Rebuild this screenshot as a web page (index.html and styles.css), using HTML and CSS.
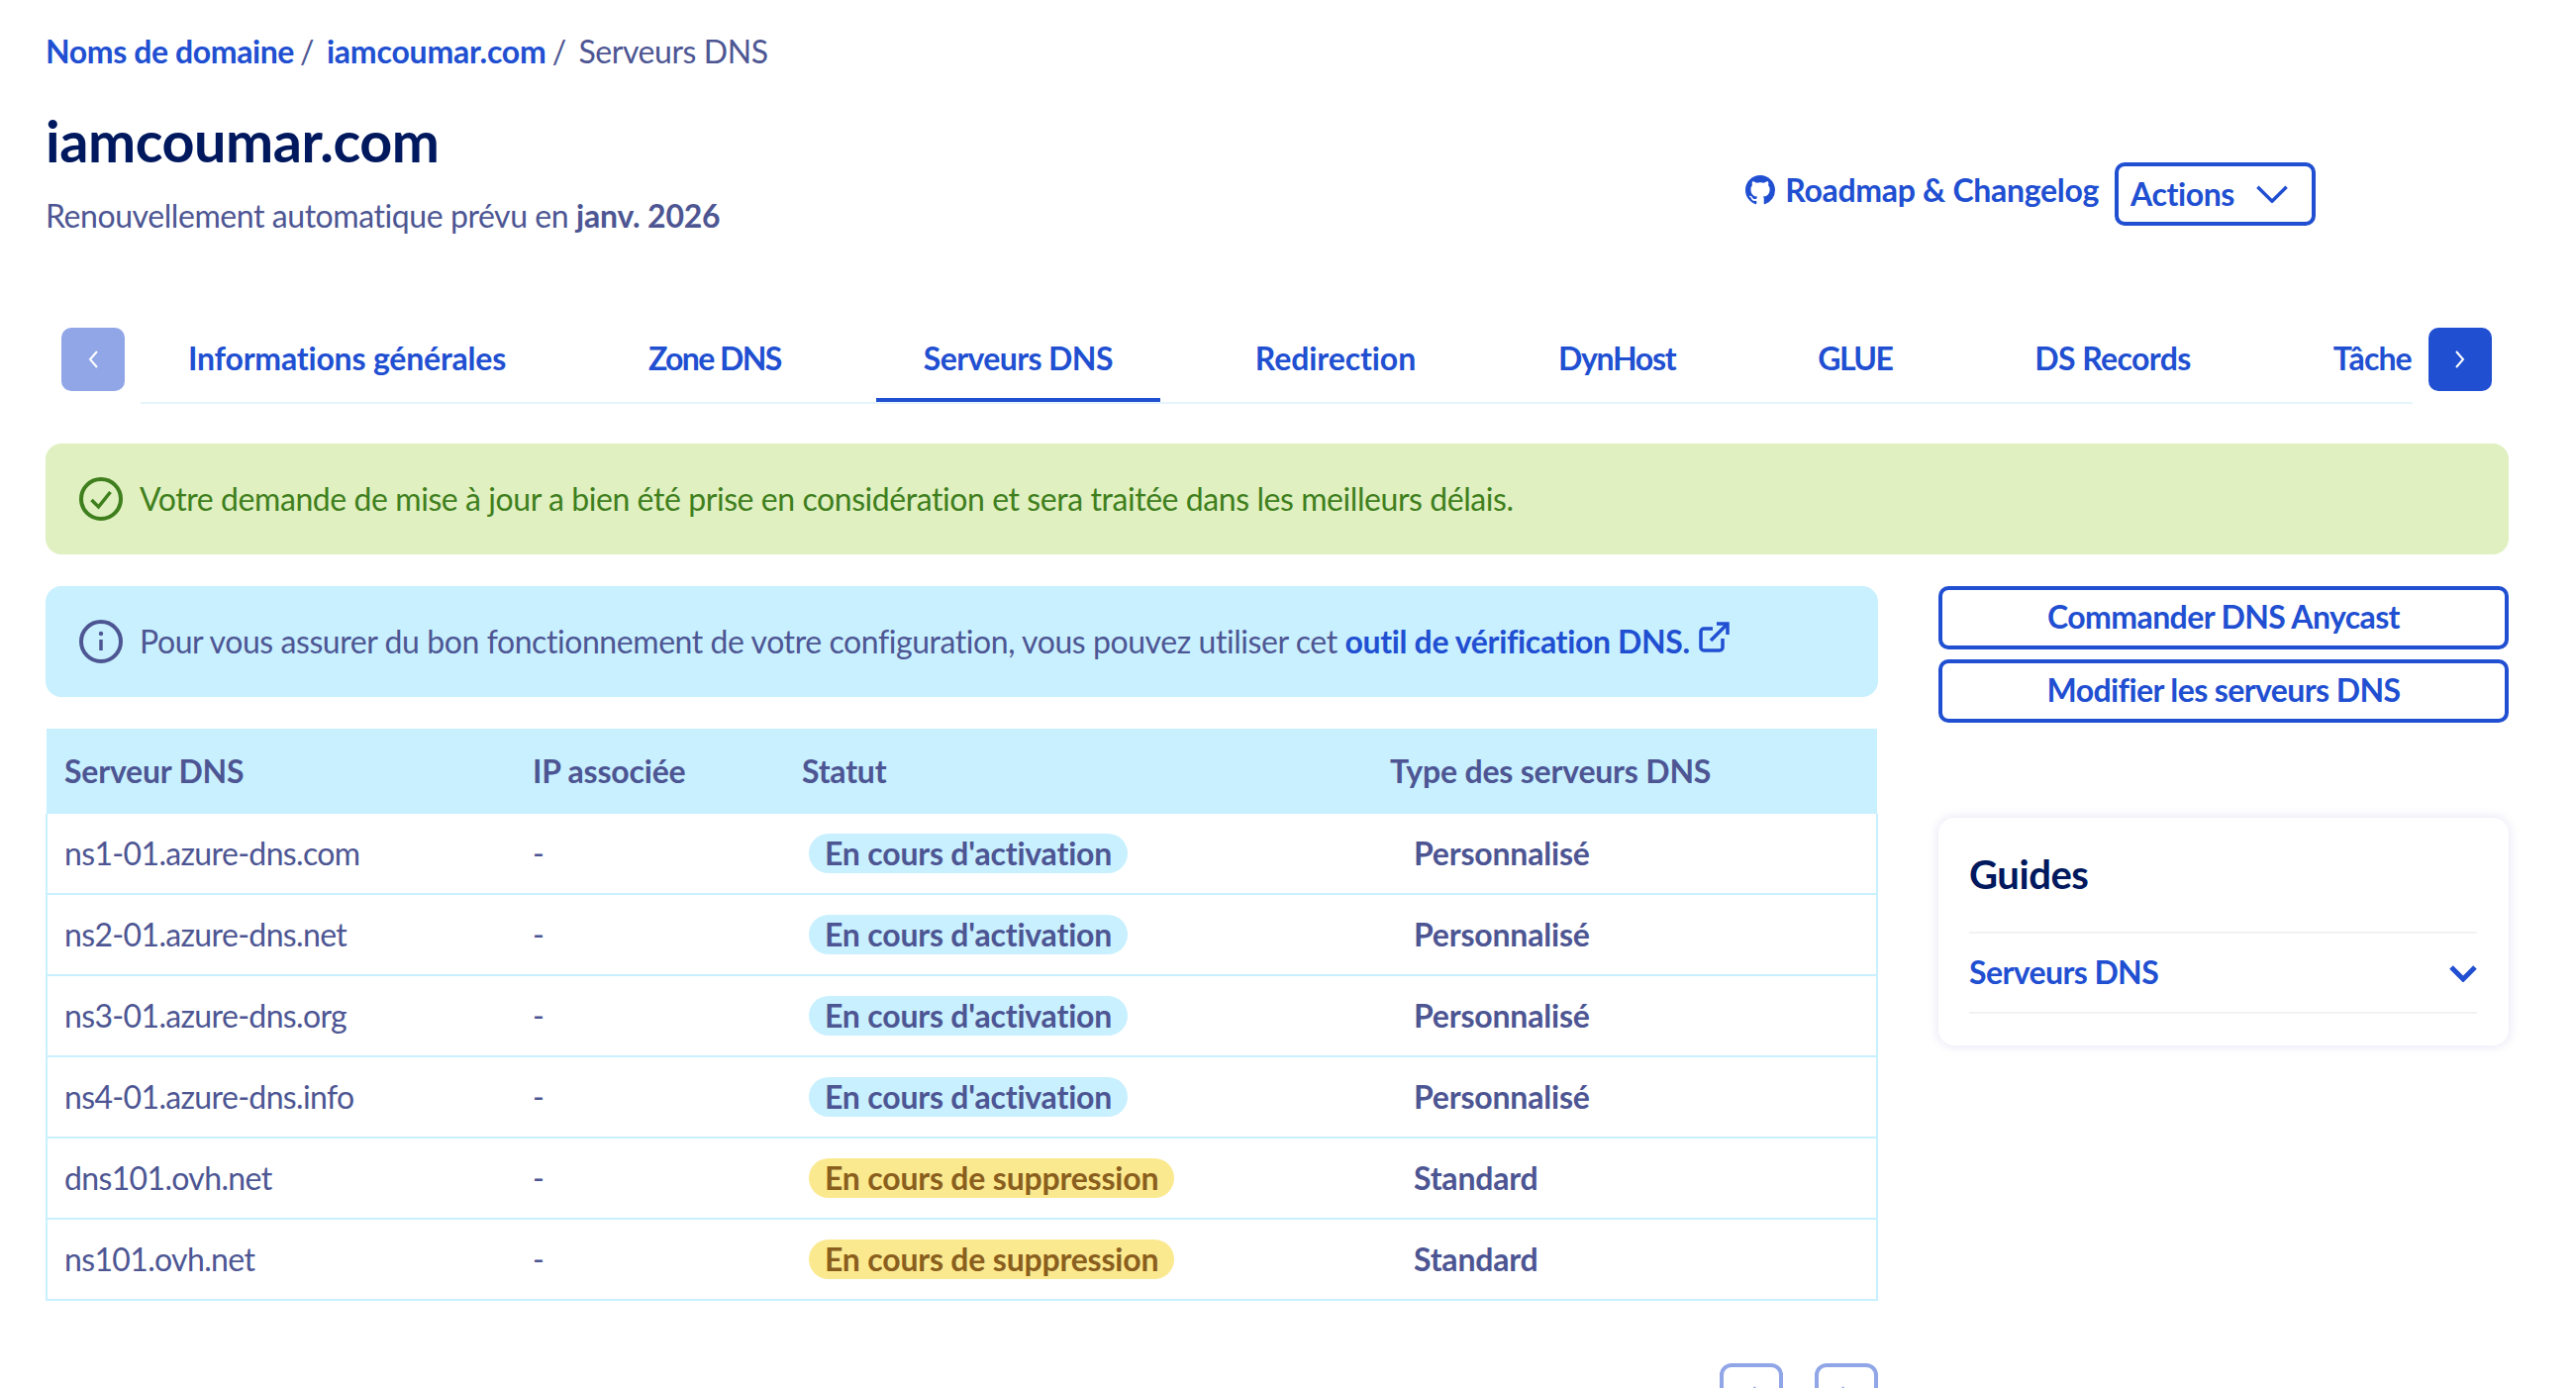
FILE: index.html
```html
<!DOCTYPE html>
<html lang="fr">
<head>
  <meta charset="UTF-8" />
  <meta name="viewport" content="width=device-width, initial-scale=1" />
  <title>Serveurs DNS</title>
  <link rel="stylesheet" href="styles.css">
</head>
<body>

<div class="page">

  <nav class="breadcrumb">
    <a href="#">Noms de domaine</a><span class="sep">/</span>
    <a href="#">iamcoumar.com</a><span class="sep">/</span>
    <span class="current">Serveurs DNS</span>
  </nav>

  <header class="header">
    <div>
      <h1>iamcoumar.com</h1>
      <p class="renew">Renouvellement automatique prévu en <strong>janv. 2026</strong></p>
    </div>
    <div class="header-actions">
      <a class="roadmap" href="#">
        <svg class="gh" viewBox="0 0 16 16" fill="currentColor"><path d="M8 0C3.58 0 0 3.58 0 8c0 3.54 2.29 6.53 5.47 7.59.4.07.55-.17.55-.38 0-.19-.01-.82-.01-1.49-2.01.37-2.53-.49-2.69-.94-.09-.23-.48-.94-.82-1.13-.28-.15-.68-.52-.01-.53.63-.01 1.08.58 1.23.82.72 1.21 1.87.87 2.33.66.07-.52.28-.87.51-1.07-1.78-.2-3.64-.89-3.64-3.95 0-.87.31-1.59.82-2.15-.08-.2-.36-1.02.08-2.12 0 0 .67-.21 2.2.82.64-.18 1.32-.27 2-.27s1.36.09 2 .27c1.53-1.04 2.2-.82 2.2-.82.44 1.1.16 1.92.08 2.12.51.56.82 1.27.82 2.15 0 3.07-1.87 3.75-3.65 3.95.29.25.54.73.54 1.48 0 1.07-.01 1.93-.01 2.2 0 .21.15.46.55.38A8.01 8.01 0 0 0 16 8c0-4.42-3.58-8-8-8z"/></svg>
        Roadmap &amp; Changelog
      </a>
      <button class="btn-actions"><span>Actions</span>
        <svg class="chev" viewBox="0 0 28 16" fill="none" stroke="currentColor" stroke-width="3"><path d="M1 1.5l13 13 13-13"/></svg>
      </button>
    </div>
  </header>

  <div class="tabs">
    <button class="tab-arrow disabled">
      <svg viewBox="0 0 12 20" fill="none" stroke="currentColor" stroke-width="2"><path d="M10 2L3 10l7 8"/></svg>
    </button>
    <ul class="tab-list">
      <li><a href="#">Informations générales</a></li>
      <li><a href="#">Zone DNS</a></li>
      <li><a class="active" href="#">Serveurs DNS</a></li>
      <li><a href="#">Redirection</a></li>
      <li><a href="#">DynHost</a></li>
      <li><a href="#">GLUE</a></li>
      <li><a href="#">DS Records</a></li>
      <li><a href="#">Tâche</a></li>
    </ul>
    <button class="tab-arrow">
      <svg viewBox="0 0 12 20" fill="none" stroke="currentColor" stroke-width="2"><path d="M2 2l7 8-7 8"/></svg>
    </button>
  </div>

  <div class="message success">
    <svg class="msg-icon" viewBox="0 0 44 44" fill="none" stroke="currentColor" stroke-width="4"><circle cx="22" cy="22" r="20"/><path d="M12.5 23l7 7 12-15" stroke-width="3.5"/></svg>
    <span>Votre demande de mise à jour a bien été prise en considération et sera traitée dans les meilleurs délais.</span>
  </div>

  <div class="columns">
    <main class="main-col">
      <div class="message info">
        <svg class="msg-icon" viewBox="0 0 44 44" fill="none" stroke="currentColor" stroke-width="4"><circle cx="22" cy="22" r="20"/><path d="M22 20v11" stroke-width="3.5"/><circle cx="22" cy="14" r="2.2" fill="currentColor" stroke="none"/></svg>
        <span>Pour vous assurer du bon fonctionnement de votre configuration, vous pouvez utiliser cet <a href="#">outil de vérification DNS.</a>
          <svg class="ext" viewBox="0 0 32 32" fill="none" stroke="#214fd1" stroke-width="3.5"><path d="M25 17v9a3 3 0 0 1-3 3H6a3 3 0 0 1-3-3V10a3 3 0 0 1 3-3h9"/><path d="M13 19L29 3"/><path d="M19 2h11v11"/></svg>
        </span>
      </div>

      <table class="dns-table">
        <thead>
          <tr>
            <th class="c-name">Serveur DNS</th>
            <th class="c-ip">IP associée</th>
            <th class="c-status">Statut</th>
            <th>Type des serveurs DNS</th>
          </tr>
        </thead>
        <tbody>
          <tr><td>ns1-01.azure-dns.com</td><td>-</td><td><span class="badge blue">En cours d'activation</span></td><td class="type">Personnalisé</td></tr>
          <tr><td>ns2-01.azure-dns.net</td><td>-</td><td><span class="badge blue">En cours d'activation</span></td><td class="type">Personnalisé</td></tr>
          <tr><td>ns3-01.azure-dns.org</td><td>-</td><td><span class="badge blue">En cours d'activation</span></td><td class="type">Personnalisé</td></tr>
          <tr><td>ns4-01.azure-dns.info</td><td>-</td><td><span class="badge blue">En cours d'activation</span></td><td class="type">Personnalisé</td></tr>
          <tr><td>dns101.ovh.net</td><td>-</td><td><span class="badge yellow">En cours de suppression</span></td><td class="type">Standard</td></tr>
          <tr><td>ns101.ovh.net</td><td>-</td><td><span class="badge yellow">En cours de suppression</span></td><td class="type">Standard</td></tr>
        </tbody>
      </table>

      <div class="pager">
        <button class="pager-btn"><svg viewBox="0 0 12 20" fill="none" stroke="currentColor" stroke-width="2"><path d="M10 2L3 10l7 8"/></svg></button>
        <button class="pager-btn"><svg viewBox="0 0 12 20" fill="none" stroke="currentColor" stroke-width="2"><path d="M2 2l7 8-7 8"/></svg></button>
      </div>
    </main>

    <aside class="side-col">
      <button class="btn-outline">Commander DNS Anycast</button>
      <button class="btn-outline">Modifier les serveurs DNS</button>

      <section class="guides">
        <h2>Guides</h2>
        <a class="guide-row" href="#">
          <span>Serveurs DNS</span>
          <svg viewBox="0 0 28 18" fill="none" stroke="currentColor" stroke-width="5"><path d="M2 3L14 15 26 3"/></svg>
        </a>
      </section>
    </aside>
  </div>

</div>

</body>
</html>
```

FILE: styles.css
```css
html, body {
  margin: 0;
  height: 100%;
  overflow: hidden;
  background: #fff;
}
body {
  font-family: "Lato", "Open Sans", sans-serif;
  font-size: 32px;
  line-height: 40px;
  color: #4d5693;
  letter-spacing: -0.43px;
}
a {
  color: #214fd1;
  text-decoration: none;
}
strong, .breadcrumb a, th, .badge, td.type {
  letter-spacing: -0.2px;
}
button {
  font-family: inherit;
  background: #fff;
  cursor: pointer;
}
.page {
  padding: 32px 68px 0 46px;
}

/* en-tete */
.breadcrumb {
  height: 40px;
  white-space: nowrap;
}
.breadcrumb a {
  font-weight: 700;
}
.breadcrumb a:first-child {
  letter-spacing: -0.4px;
}
.breadcrumb .sep {
  margin: 0 5px 0 6px;
}
.header {
  display: flex;
  justify-content: space-between;
  align-items: flex-end;
  margin-top: 38px;
}
h1 {
  margin: 0;
  font-size: 57.5px;
  line-height: 64px;
  font-weight: 700;
  color: #00185e;
}
.renew {
  margin: 24px 0 0;
}
.renew strong {
  font-weight: 700;
}
.header-actions {
  display: flex;
  align-items: center;
  gap: 16px;
  margin: 0 195px 10px 0;
}
.roadmap {
  display: flex;
  align-items: center;
  gap: 10px;
  font-weight: 700;
  letter-spacing: -0.3px;
  margin-top: -8px;
}
.gh {
  width: 30px;
  height: 30px;
}
.btn-actions {
  display: flex;
  align-items: center;
  justify-content: space-between;
  width: 203px;
  height: 64px;
  padding: 0 24px 0 12px;
  border: 4px solid #214fd1;
  border-radius: 10px;
  color: #214fd1;
  font-size: 32px;
  letter-spacing: -0.4px;
  font-weight: 700;
}
.btn-actions span {
  margin-top: -2px;
}
.chev {
  width: 32px;
  height: 18px;
}

/* onglets */
.tabs {
  display: flex;
  gap: 16px;
  margin: 93px 17px 0 16px;
  align-items: flex-start;
}
.tab-arrow {
  flex: none;
  width: 64px;
  height: 64px;
  border: 0;
  border-radius: 10px;
  background: #214fd1;
  color: #fff;
  padding: 0;
}
.tab-arrow.disabled {
  background: #91a6e7;
}
.tab-arrow svg,
.pager-btn svg {
  width: 12px;
  height: 20px;
  display: block;
  margin: auto;
}
.tab-list {
  flex: 1;
  display: flex;
  gap: 48px;
  margin: 0;
  padding: 0;
  list-style: none;
  overflow: hidden;
  white-space: nowrap;
  border-bottom: 2px solid #e6f5fc;
}
.tab-list a {
  display: block;
  padding: 11px 48px 20px;
  border-bottom: 4px solid transparent;
  font-weight: 700;
  letter-spacing: -0.6px;
}
.tab-list li:nth-child(1) a { letter-spacing: -0.2px; }
.tab-list li:nth-child(2) a { letter-spacing: -1.6px; }
.tab-list li:nth-child(4) a { letter-spacing: -0.1px; }
.tab-list li:nth-child(5) a { letter-spacing: -1.3px; }
.tab-list li:nth-child(6) a { letter-spacing: -1.6px; }
.tab-list li:nth-child(8) a {
  padding-right: 0;
  letter-spacing: -0.9px;
}
.tab-list a.active {
  border-bottom-color: #214fd1;
}

/* messages */
.message {
  display: flex;
  align-items: center;
  gap: 17px;
  height: 112px;
  padding: 0 34px;
  box-sizing: border-box;
  border-radius: 16px;
}
.message.success {
  margin-top: 40px;
  background: #e0f0c0;
  color: #3f7f1d;
}
.message.info {
  background: #c8f0ff;
}
.message.info a {
  font-weight: 700;
  letter-spacing: -0.35px;
}
.msg-icon {
  flex: none;
  width: 44px;
  height: 44px;
}
.ext {
  width: 32px;
  height: 32px;
}

/* colonnes */
.columns {
  display: flex;
  gap: 61px;
  margin-top: 32px;
}
.main-col {
  width: 1851px;
  flex: none;
}
.side-col {
  flex: 1;
  display: flex;
  flex-direction: column;
}

/* tableau */
.dns-table {
  width: 100%;
  margin-top: 32px;
  border-collapse: collapse;
  table-layout: fixed;
}
.dns-table th {
  height: 86px;
  padding: 0 0 0 18px;
  text-align: left;
  font-weight: 700;
  background: #c8f0ff;
}
.c-name { width: 455px; }
.c-ip { width: 254px; }
.c-status { width: 576px; }
.dns-table td {
  height: 80px;
  padding: 0 0 0 18px;
  border: 2px solid #c8f0ff;
  border-width: 0 0 2px;
}
.dns-table td:first-child {
  border-left-width: 2px;
  padding-left: 17px;
  letter-spacing: -0.65px;
}
.dns-table td:last-child { border-right-width: 2px; }
.dns-table td.type {
  padding-left: 42px;
  font-weight: 700;
}
.badge {
  display: inline-block;
  height: 40px;
  margin-left: 7px;
  padding: 0 16px;
  border-radius: 20px;
  font-weight: 700;
}
.badge.blue {
  background: #c8f0ff;
}
.badge.yellow {
  background: #fbe98f;
  color: #8a5f1e;
}
.pager {
  display: flex;
  justify-content: flex-end;
  gap: 32px;
  margin-top: 63px;
}
.pager-btn {
  width: 64px;
  height: 64px;
  padding: 0;
  border: 4px solid #91a6e7;
  border-radius: 12px;
  color: #91a6e7;
}

/* colonne droite */
.btn-outline {
  height: 64px;
  margin-bottom: 10px;
  padding: 0 0 3px;
  border: 4px solid #214fd1;
  border-radius: 10px;
  color: #214fd1;
  font-size: 32px;
  letter-spacing: -0.6px;
  font-weight: 700;
}
.guides {
  margin-top: 86px;
  padding: 32px 32px 32px 31px;
  border-radius: 16px;
  box-shadow: 0 0 12px rgba(0, 14, 156, 0.12);
}
.guides h2 {
  margin: 0;
  font-size: 40px;
  line-height: 50px;
  font-weight: 700;
  color: #00185e;
}
.guide-row {
  display: flex;
  align-items: center;
  justify-content: space-between;
  height: 83px;
  margin-top: 33px;
  box-sizing: border-box;
  border-top: 2px solid #f2f2f2;
  border-bottom: 2px solid #f2f2f2;
  font-weight: 700;
  letter-spacing: -0.6px;
}
.guide-row span {
  margin-top: -2px;
}
.guide-row svg {
  width: 28px;
  height: 18px;
}
```
